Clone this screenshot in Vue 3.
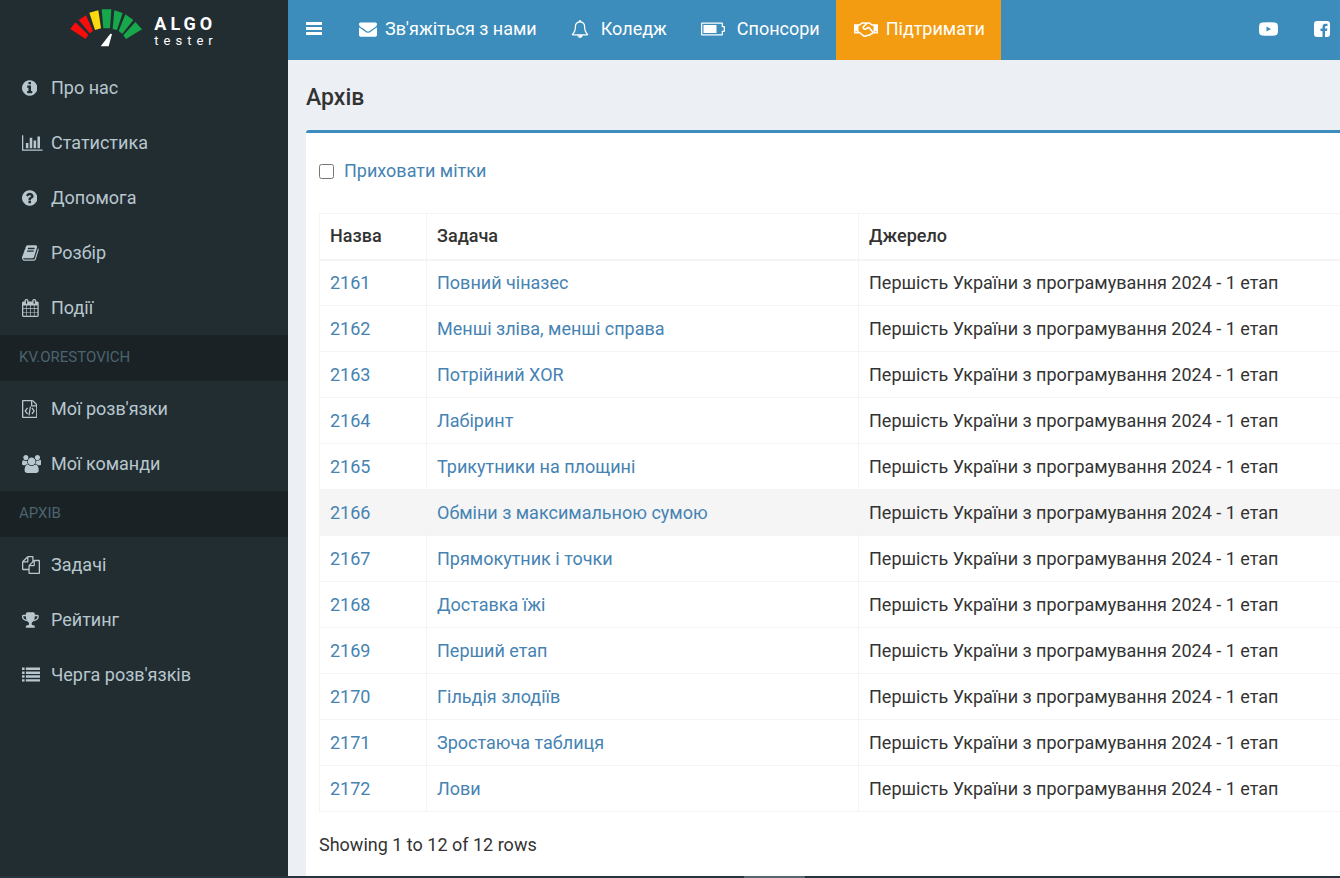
<script setup>
import { ref } from 'vue'

const hideTags = ref(false)

const circle = 'q0 209-103 385.5t-279.5 279.5-385.5 103-385.5-103-279.5-279.5-103-385.5 103-385.5 279.5-279.5 385.5-103 385.5 103 279.5 279.5 103 385.5z'

const icons = {
  info: { x: 128, w: 1536, d: 'M1152 1376v-160q0-14-9-23t-23-9h-96v-512q0-14-9-23t-23-9h-320q-14 0-23 9t-9 23v160q0 14 9 23t23 9h96v320h-96q-14 0-23 9t-9 23v160q0 14 9 23t23 9h448q14 0 23-9t9-23zm-128-896v-160q0-14-9-23t-23-9h-192q-14 0-23 9t-9 23v160q0 14 9 23t23 9h192q14 0 23-9t9-23zm640 416' + circle },
  chart: { x: 0, w: 2048, d: 'M640 896v512h-256v-512h256zm384-512v1024h-256v-1024h256zm1024 1152v128h-2048v-1536h128v1408h1920zm-640-896v768h-256v-768h256zm384-384v1152h-256v-1152h256z' },
  question: { x: 128, w: 1536, d: 'M1024 1376v-192q0-14-9-23t-23-9h-192q-14 0-23 9t-9 23v192q0 14 9 23t23 9h192q14 0 23-9t9-23zm256-672q0-88-55.5-163t-138.5-116-170-41q-243 0-371 213-15 24 8 42l132 100q7 6 19 6 16 0 25-12 53-68 86-92 34-24 86-24 48 0 85.5 26t37.5 59q0 38-20 61t-68 45q-63 28-115.5 86.5t-52.5 125.5v36q0 14 9 23t23 9h192q14 0 23-9t9-23q0-19 21.5-49.5t54.5-49.5q32-18 49-28.5t46-35 44.5-48 28-60.5 12.5-81zm384 192' + circle },
  book: { x: 64, w: 1664, d: 'M1703 478q40 57 18 129l-275 906q-19 64-76.5 107.5t-122.5 43.5h-923q-77 0-148.5-53.5t-99.5-131.5q-24-67-2-127 0-4 3-27t4-37q1-8-3-21.5t-3-19.5q2-11 8-21t16.5-23.5 16.5-23.5q23-38 45-91.5t30-91.5q3-10 .5-30t-.5-28q3-11 17-28t17-23q21-36 42-92t25-90q1-9-2.5-32t.5-28q4-13 22-30.5t22-22.5q19-26 42.5-84.5t27.5-96.5q1-8-3-25.5t-2-26.5q2-8 9-18t18-23 17-21q8-12 16.5-30.5t15-35 16-36 19.5-32 26.5-23.5 36-11.5 47.5 5.5l-1 3q38-9 51-9h761q74 0 114 56t18 130l-274 906q-36 119-71.5 153.5t-128.5 34.5h-869q-27 0-38 15-11 16-1 43 24 70 144 70h923q29 0 56-15.5t35-41.5l300-987q7-22 5-57 38 15 59 43zm-1064 2q-4 13 2 22.5t20 9.5h608q13 0 25.5-9.5t16.5-22.5l21-64q4-13-2-22.5t-20-9.5h-608q-13 0-25.5 9.5t-16.5 22.5zm-83 256q-4 13 2 22.5t20 9.5h608q13 0 25.5-9.5t16.5-22.5l21-64q4-13-2-22.5t-20-9.5h-608q-13 0-25.5 9.5t-16.5 22.5z' },
  calendar: { x: 64, w: 1664, d: 'M192 1664h288v-288h-288v288zm352 0h320v-288h-320v288zm-352-352h288v-320h-288v320zm352 0h320v-320h-320v320zm-352-384h288v-288h-288v288zm736 736h320v-288h-320v288zm-384-736h320v-288h-320v288zm768 736h288v-288h-288v288zm-384-352h320v-320h-320v320zm-352-864v-288q0-13-9.5-22.5t-22.5-9.5h-64q-13 0-22.5 9.5t-9.5 22.5v288q0 13 9.5 22.5t22.5 9.5h64q13 0 22.5-9.5t9.5-22.5zm736 864h288v-320h-288v320zm-384-384h320v-288h-320v288zm384 0h288v-288h-288v288zm32-480v-288q0-13-9.5-22.5t-22.5-9.5h-64q-13 0-22.5 9.5t-9.5 22.5v288q0 13 9.5 22.5t22.5 9.5h64q13 0 22.5-9.5t9.5-22.5zm384-64v1280q0 52-38 90t-90 38h-1408q-52 0-90-38t-38-90v-1280q0-52 38-90t90-38h128v-96q0-66 47-113t113-47h64q66 0 113 47t47 113v96h384v-96q0-66 47-113t113-47h64q66 0 113 47t47 113v96h128q52 0 90 38t38 90z' },
  code: { x: 128, w: 1536, d: 'M1596 380q28 28 48 76t20 88v1152q0 40-28 68t-68 28h-1344q-40 0-68-28t-28-68v-1600q0-40 28-68t68-28h896q40 0 88 20t76 48zm-444-244v376h376q-10-29-22-41l-313-313q-12-12-41-22zm384 1528v-1024h-416q-40 0-68-28t-28-68v-416h-768v1536h1280zm-928-896q8-11 21-12.5t24 6.5l51 38q11 8 12.5 21t-6.5 24l-182 243 182 243q8 11 6.5 24t-12.5 21l-51 38q-11 8-24 6.5t-21-12.5l-226-301q-14-19 0-38zm802 301q14 19 0 38l-226 301q-8 11-21 12.5t-24-6.5l-51-38q-11-8-12.5-21t6.5-24l182-243-182-243q-8-11-6.5-24t12.5-21l51-38q11-8 24-6.5t21 12.5zm-620 461q-13-2-20.5-13t-5.5-24l138-831q2-13 13-20.5t24-5.5l63 10q13 2 20.5 13t5.5 24l-138 831q-2 13-13 20.5t-24 5.5z' },
  group: { x: 64, w: 1920, d: 'M657 896q-162 5-265 128h-134q-82 0-138-40.5t-56-118.5q0-353 124-353 6 0 43.5 21t97.5 42.5 119 21.5q67 0 133-23-5 37-5 66 0 159 93 290zm1071 637q0 120-73 189.5t-194 69.5h-874q-121 0-194-69.5t-73-189.5q0-53 3.5-103.5t14-109 26.5-108.5 43-97.5 62-81 85.5-53.5 111.5-20q10 0 43 21.5t73 48 107 48 135 21.5 135-21.5 107-48 73-48 43-21.5q61 0 111.5 20t85.5 53.5 62 81 43 97.5 26.5 108.5 14 109 3.5 103.5zm-1024-1277q0 106-75 181t-181 75-181-75-75-181 75-181 181-75 181 75 75 181zm704 384q0 159-112.5 271.5t-271.5 112.5-271.5-112.5-112.5-271.5 112.5-271.5 271.5-112.5 271.5 112.5 112.5 271.5zm576 225q0 78-56 118.5t-138 40.5h-134q-103-123-265-128 93-131 93-290 0-29-5-66 66 23 133 23 59 0 119-21.5t97.5-42.5 43.5-21q124 0 124 353zm-128-609q0 106-75 181t-181 75-181-75-75-181 75-181 181-75 181 75 75 181z' },
  files: { x: 0, w: 1792, d: 'M1696 384q40 0 68 28t28 68v1216q0 40-28 68t-68 28h-960q-40 0-68-28t-28-68v-288h-544q-40 0-68-28t-28-68v-672q0-40 20-88t48-76l408-408q28-28 76-48t88-20h416q40 0 68 28t28 68v328q68-40 128-40h416zm-544 213l-299 299h299v-299zm-640-384l-299 299h299v-299zm196 647l316-316v-416h-384v416q0 40-28 68t-68 28h-416v640h512v-256q0-40 20-88t48-76zm956 804v-1152h-384v416q0 40-28 68t-68 28h-416v640h896z' },
  trophy: { x: 64, w: 1664, d: 'M522 883q-74-162-74-371h-256v96q0 78 94.5 162t235.5 113zm1078-275v-96h-256q0 209-74 371 141-29 235.5-113t94.5-162zm128-128v128q0 71-41.5 143t-112 130-173 97.5-215.5 44.5q-42 54-95 95-38 34-52.5 72.5t-14.5 89.5q0 54 30.5 91t97.5 37q75 0 133.5 45.5t58.5 114.5v64q0 14-9 23t-23 9h-832q-14 0-23-9t-9-23v-64q0-69 58.5-114.5t133.5-45.5q67 0 97.5-37t30.5-91q0-51-14.5-89.5t-52.5-72.5q-53-41-95-95-113-5-215.5-44.5t-173-97.5-112-130-41.5-143v-128q0-40 28-68t68-28h288v-96q0-66 47-113t113-47h576q66 0 113 47t47 113v96h288q40 0 68 28t28 68z' },
  list: { x: 0, w: 1792, d: 'M0 160h256v240h-256zM384 160h1408v240h-1408zM0 544h256v240h-256zM384 544h1408v240h-1408zM0 928h256v240h-256zM384 928h1408v240h-1408zM0 1312h256v240h-256zM384 1312h1408v240h-1408z' },
}

const groups = [
  { title: '', items: [
    { icon: 'info', text: 'Про нас' },
    { icon: 'chart', text: 'Статистика' },
    { icon: 'question', text: 'Допомога' },
    { icon: 'book', text: 'Розбір' },
    { icon: 'calendar', text: 'Події' },
  ] },
  { title: 'KV.ORESTOVICH', items: [
    { icon: 'code', text: "Мої розв'язки" },
    { icon: 'group', text: 'Мої команди' },
  ] },
  { title: 'АРХІВ', items: [
    { icon: 'files', text: 'Задачі' },
    { icon: 'trophy', text: 'Рейтинг' },
    { icon: 'list', text: "Черга розв'язків" },
  ] },
]

const source = 'Першість України з програмування 2024 - 1 етап'
const problems = [
  'Повний чіназес', 'Менші зліва, менші справа', 'Потрійний XOR', 'Лабіринт',
  'Трикутники на площині', 'Обміни з максимальною сумою', 'Прямокутник і точки',
  'Доставка їжі', 'Перший етап', 'Гільдія злодіїв', 'Зростаюча таблиця', 'Лови',
].map((title, i) => ({ id: 2161 + i, title }))
const activeId = 2166
</script>

<template>
  <div class="page">
    <div class="shell">
      <aside class="sidebar">
        <a class="logo" href="#">
          <svg class="gauge" viewBox="30 28 216 114" aria-hidden="true">
            <path fill="#f80d0d" d="M31 88 46 68 85 105 77 118ZM56 61 78 47 99 94 89 101Z" />
            <path fill="#ffd90f" d="M88 39 115 32 123 86 105 91Z" />
            <path fill="#17a84b" d="M125 29H154L150 86H130ZM163 32 188 40 171 91 158 88ZM196 44 220 61 187 102 176 94ZM226 67 246 89 198 118 190 107Z" />
            <path fill="#fff" d="M151 102 156 103 146 140H122Z" />
          </svg>
          <span class="brand"><b>ALGO</b><small>tester</small></span>
        </a>
        <nav>
          <template v-for="g in groups" :key="g.title">
            <div v-if="g.title" class="section">{{ g.title }}</div>
            <a v-for="item in g.items" :key="item.text" class="item" href="#">
              <span class="slot">
                <svg class="icon" :viewBox="`${icons[item.icon].x} 0 ${icons[item.icon].w} 1792`" aria-hidden="true">
                  <path :d="icons[item.icon].d" />
                </svg>
              </span>
              <span>{{ item.text }}</span>
            </a>
          </template>
        </nav>
      </aside>

      <div class="main">
        <header class="topbar">
          <button class="toggle" type="button" aria-label="Меню">
            <svg class="icon" viewBox="0 0 16 18"><path d="M0 2h16v3H0zM0 7h16v3H0zM0 12h16v3H0z" /></svg>
          </button>
          <a class="link" href="#">
            <svg class="icon" viewBox="0 0 1792 1792" aria-hidden="true"><path d="M1792 710v794q0 66-47 113t-113 47h-1472q-66 0-113-47t-47-113v-794q44 49 101 87 362 246 497 345 57 42 92.5 65.5t94.5 48 110 24.5h2q51 0 110-24.5t94.5-48 92.5-65.5q170-123 498-345 57-39 100-87zm0-294q0 79-49 151t-122 123q-376 261-468 325-10 7-42.5 31t-54 38.5-52 32.5-57.5 27-50 9h-2q-23 0-50-9t-57.5-27-52-32.5-54-38.5-42.5-31q-91-64-262-182.5t-205-142.5q-62-42-117-115.5t-55-136.5q0-78 41.5-130t118.5-52h1472q65 0 112.5 47t47.5 113z" /></svg>
            <span>Зв'яжіться з нами</span>
          </a>
          <a class="link wide" href="#">
            <svg class="icon" viewBox="0 0 1792 1792" aria-hidden="true"><path d="M912 1696q0-16-16-16-59 0-101.5-42.5t-42.5-101.5q0-16-16-16t-16 16q0 73 51.5 124.5t124.5 51.5q16 0 16-16zm-666-288h1300q-266-300-266-832 0-51-24-105t-69-103-121.5-80.5-169.5-31.5-169.5 31.5-121.5 80.5-69 103-24 105q0 532-266 832zm1482 0q0 52-38 90t-90 38h-448q0 106-75 181t-181 75-181-75-75-181h-448q-52 0-90-38t-38-90q50-42 91-88t85-119.5 74.5-158.5 50-206 19.5-260q0-152 117-282.5t307-158.5q-8-19-8-39 0-40 28-68t68-28 68 28 28 68q0 20-8 39 190 28 307 158.5t117 282.5q0 139 19.5 260t50 206 74.5 158.5 85 119.5 91 88z" /></svg>
            <span>Коледж</span>
          </a>
          <a class="link wide" href="#">
            <svg class="icon" viewBox="0 0 24 18" aria-hidden="true"><path fill-rule="evenodd" d="M1 2.500h20a1 1 0 0 1 1 1v2.500h1a1 1 0 0 1 1 1v4a1 1 0 0 1-1 1h-1v2.500a1 1 0 0 1-1 1H1a1 1 0 0 1-1-1V3.500a1 1 0 0 1 1-1zM1.300 3.800v10.400h19.400v-3.500h2v-3.400h-2v-3.500zM2.500 5h13v8h-13z" /></svg>
            <span>Спонсори</span>
          </a>
          <a class="link support" href="#">
            <svg class="icon" viewBox="0 0 24 18" aria-hidden="true">
              <path fill-rule="evenodd" d="M0 4.200h4.500v9.300H0zM19.500 4.200H24v9.300h-4.500zM1.500 11v1.200h1.200V11zM21.300 11v1.200h1.200V11z" />
              <path class="stroke" d="M4 5h1.500L8 3h4l1.500 1M4 12.500h1.500l4 3.300q1.500.8 3 0l1.500-.5q2 .2 2.800-1.300 1.700 0 1.900-1.500H20M20 5h-2L15.500 3h-2.300l-4 4q0 2 2 2.200 1.500 0 2.800-1.700h1l3.700 4.500" />
            </svg>
            <span>Підтримати</span>
          </a>
          <div class="social">
            <a href="#" aria-label="YouTube">
              <svg class="icon" viewBox="0 0 19 18"><path fill-rule="evenodd" d="M3 2.500Q9.500 2 16 2.500q2.500.2 2.800 2.500.4 4 0 8-.3 2.300-2.800 2.500-6.500.5-13 0Q.5 15.300.2 13q-.4-4 0-8Q.5 2.700 3 2.500zM7.500 6.500v5L12 9z" /></svg>
            </a>
            <a href="#" aria-label="Facebook">
              <svg class="icon" viewBox="0 0 16 18"><path d="M3 1h10q3 0 3 3v10q0 3-3 3h-2v-6h2l.4-2.400H11V7.200Q11 6 12.200 6h1.300V3.800H11.600Q8.500 3.800 8.500 7v1.600h-2V11h2v6H3q-3 0-3-3V4q0-3 3-3z" /></svg>
            </a>
          </div>
        </header>

        <main class="content">
          <h1>Архів</h1>
          <section class="box">
            <label class="check">
              <input v-model="hideTags" type="checkbox" />
              <span>Приховати мітки</span>
            </label>
            <table>
              <colgroup><col class="c-id" /><col class="c-title" /><col /></colgroup>
              <thead>
                <tr><th>Назва</th><th>Задача</th><th>Джерело</th></tr>
              </thead>
              <tbody>
                <tr v-for="p in problems" :key="p.id" :class="{ active: p.id === activeId }">
                  <td><a href="#">{{ p.id }}</a></td>
                  <td><a href="#">{{ p.title }}</a></td>
                  <td>{{ source }}</td>
                </tr>
              </tbody>
            </table>
            <p class="summary">Showing 1 to 12 of 12 rows</p>
          </section>
        </main>
      </div>
    </div>
    <div class="strip"><span class="thumb"></span></div>
  </div>
</template>

<style>
body {
  margin: 0;
  background: #222d32;
}
</style>

<style scoped>
.page {
  display: flex;
  flex-direction: column;
  min-height: 100vh;
  box-sizing: border-box;
  overflow: hidden;
  font-family: Roboto, "Liberation Sans", sans-serif;
  font-size: 18px;
  line-height: 26px;
  color: #333;
}
a {
  color: #4683b3;
  text-decoration: none;
}
.shell {
  display: flex;
  flex: 1;
}
.sidebar {
  width: 288px;
  flex: none;
  background: #222d32;
}
.logo {
  display: flex;
  justify-content: center;
  align-items: flex-start;
  gap: 12px;
  height: 60px;
  box-sizing: border-box;
  padding-top: 9px;
  color: #fff;
}
.gauge {
  width: 72px;
  height: 38px;
}
.brand {
  display: flex;
  flex-direction: column;
  padding-top: 5px;
}
.brand b {
  font-size: 18px;
  line-height: 20px;
  letter-spacing: 4px;
}
.brand small {
  font-size: 13px;
  line-height: 14px;
  letter-spacing: 5px;
}
.icon {
  display: block;
  height: 18px;
  fill: currentColor;
}
.stroke {
  fill: none;
  stroke: currentColor;
  stroke-width: 1.6;
}
.item {
  display: flex;
  align-items: center;
  height: 55px;
  padding-left: 22px;
  color: #b8c7ce;
}
.slot {
  width: 29px;
}
.section {
  height: 46px;
  padding-left: 19px;
  line-height: 44px;
  font-size: 15px;
  color: #4b646f;
  background: #1a2226;
}
.main {
  flex: 1;
  min-width: 0;
  display: flex;
  flex-direction: column;
  background: #ecf0f5;
}
.topbar {
  display: flex;
  height: 60px;
  background: #3c8dbc;
  color: #fff;
}
.toggle {
  display: flex;
  align-items: center;
  border: 0;
  padding: 0 19px 2px 18px;
  background: none;
  color: #fff;
}
.link {
  display: flex;
  align-items: center;
  gap: 8px;
  padding: 0 16px 2px 18px;
  color: #fff;
  white-space: nowrap;
}
.wide {
  gap: 12px;
}
.support {
  background: #f39c12;
}
.social {
  display: flex;
  align-items: center;
  gap: 36px;
  margin-left: auto;
  padding: 0 10px 2px 0;
}
.social a {
  color: #fff;
}
.content {
  flex: 1;
  display: flex;
  flex-direction: column;
  padding-left: 18px;
}
h1 {
  margin: 25px 0 19px;
  font-size: 23px;
  line-height: 26px;
  font-weight: 500;
}
.box {
  flex: 1;
  padding: 25px 0 0 13px;
  border-top: 3px solid #3c8dbc;
  border-top-left-radius: 3px;
  background: #fff;
}
.check {
  display: flex;
  align-items: center;
  gap: 10px;
  width: max-content;
  margin-bottom: 29px;
  color: #4683b3;
}
.check input {
  width: 15px;
  height: 15px;
  margin: 0;
}
table {
  width: 100%;
  table-layout: fixed;
  border-collapse: collapse;
  border: 1px solid #f4f4f4;
  border-right: 0;
}
.c-id {
  width: 107px;
}
.c-title {
  width: 432px;
}
th,
td {
  height: 46px;
  box-sizing: border-box;
  padding: 0 10px;
  border: 1px solid #f4f4f4;
  border-right: 0;
  text-align: left;
  white-space: nowrap;
}
tr > :last-child {
  border-right: 0;
}
th {
  border-bottom-width: 2px;
  font-weight: 500;
}
.active {
  background: #f5f5f5;
}
.summary {
  margin: 20px 0 18px;
}
.strip {
  height: 2px;
  background: #27343b;
}
.thumb {
  display: block;
  width: 61px;
  height: 2px;
  margin-left: 55.5%;
  background: #5b666d;
}
</style>
